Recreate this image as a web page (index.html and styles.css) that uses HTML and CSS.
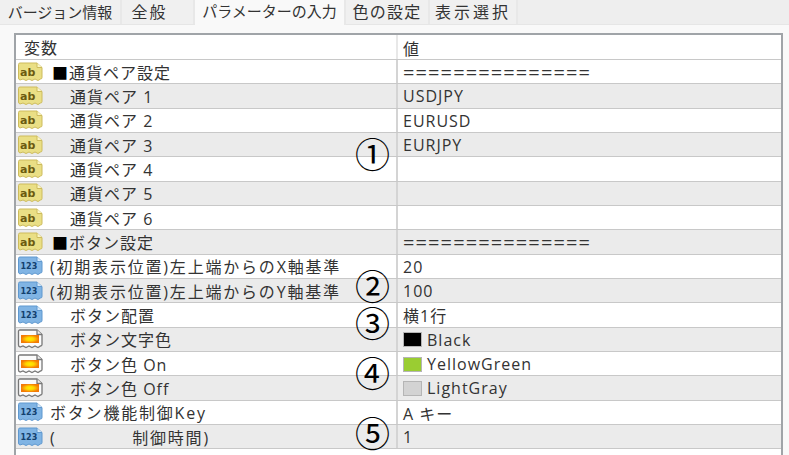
FILE: index.html
```html
<!DOCTYPE html>
<html lang="ja">
<head>
    <meta charset="UTF-8">
    <meta name="viewport" content="width=device-width, initial-scale=1.0">
    <title>パラメーターの入力</title>
    <link rel="stylesheet" href="styles.css">
</head>
<body>
    <svg class="defs" width="0" height="0">
        <defs>
            <path id="page" d="M1.5 2.5 Q1.5 1 3 1 H20 L25 5.5 V15.5 Q25 17 23.5 17 L21 18.5 L18 17 L15 18.5 L12 17 L9 18.5 L6 17 L3 18 Q1.5 17.5 1.5 16 Z"/>
            <g id="icon-ab">
                <use href="#page" fill="#eadf85" stroke="#cdbb5c"/>
                <path d="M20 1 V5.5 H25" fill="#fbf6c4" stroke="#cdbb5c"/>
                <text x="3" y="14" class="icon-text">ab</text>
            </g>
            <g id="icon-num">
                <use href="#page" fill="#80b4e4" stroke="#5f98cf"/>
                <path d="M20 1 V5.5 H25" fill="#d6e9fa" stroke="#5f98cf"/>
                <text x="3.5" y="13" class="icon-text icon-digits">123</text>
            </g>
            <g id="icon-color">
                <use href="#page" fill="#fbfbfb" stroke="#777" stroke-width="1.3"/>
                <path d="M20 1 V5.5 H25" fill="#eee" stroke="#777" stroke-width="1.3"/>
                <rect x="4" y="6" width="18" height="8" fill="url(#flame)"/>
            </g>
            <radialGradient id="flame">
                <stop offset="0" stop-color="#ffee00"/>
                <stop offset="0.45" stop-color="#ffd500"/>
                <stop offset="1" stop-color="#f37a06"/>
            </radialGradient>
        </defs>
    </svg>

    <!-- Onglets -->
    <div class="tabs">
        <div class="tab tab-version">バージョン情報</div>
        <div class="tab tab-general">全般</div>
        <div class="tab tab-active">パラメーターの入力</div>
        <div class="tab tab-colors">色の設定</div>
        <div class="tab tab-display">表示選択</div>
    </div>

    <div class="panel">
        <div class="list">
            <div class="row head">
                <div class="name">変数</div>
                <div class="value">値</div>
            </div>

            <div class="row">
                <div class="name"><svg class="icon"><use href="#icon-ab"/></svg><span class="label lead"><b class="box">■</b>通貨ペア設定</span></div>
                <div class="value rule">===============</div>
            </div>
            <div class="row alt">
                <div class="name"><svg class="icon"><use href="#icon-ab"/></svg><span class="label sub">通貨ペア 1</span></div>
                <div class="value">USDJPY</div>
            </div>
            <div class="row">
                <div class="name"><svg class="icon"><use href="#icon-ab"/></svg><span class="label sub">通貨ペア 2</span></div>
                <div class="value">EURUSD</div>
            </div>
            <div class="row alt">
                <div class="name"><svg class="icon"><use href="#icon-ab"/></svg><span class="label sub">通貨ペア 3</span></div>
                <div class="value">EURJPY</div>
            </div>
            <div class="row">
                <div class="name"><svg class="icon"><use href="#icon-ab"/></svg><span class="label sub">通貨ペア 4</span></div>
                <div class="value"></div>
            </div>
            <div class="row alt">
                <div class="name"><svg class="icon"><use href="#icon-ab"/></svg><span class="label sub">通貨ペア 5</span></div>
                <div class="value"></div>
            </div>
            <div class="row">
                <div class="name"><svg class="icon"><use href="#icon-ab"/></svg><span class="label sub">通貨ペア 6</span></div>
                <div class="value"></div>
            </div>
            <div class="row alt">
                <div class="name"><svg class="icon"><use href="#icon-ab"/></svg><span class="label lead"><b class="box">■</b>ボタン設定</span></div>
                <div class="value rule">===============</div>
            </div>
            <div class="row">
                <div class="name"><svg class="icon"><use href="#icon-num"/></svg><span class="label wide">(初期表示位置)左上端からのX軸基準</span></div>
                <div class="value">20</div>
            </div>
            <div class="row alt">
                <div class="name"><svg class="icon"><use href="#icon-num"/></svg><span class="label wide">(初期表示位置)左上端からのY軸基準</span></div>
                <div class="value">100</div>
            </div>
            <div class="row">
                <div class="name"><svg class="icon"><use href="#icon-num"/></svg><span class="label sub">ボタン配置</span></div>
                <div class="value">横1行</div>
            </div>
            <div class="row alt">
                <div class="name"><svg class="icon"><use href="#icon-color"/></svg><span class="label sub">ボタン文字色</span></div>
                <div class="value"><span class="swatch black"></span>Black</div>
            </div>
            <div class="row">
                <div class="name"><svg class="icon"><use href="#icon-color"/></svg><span class="label sub">ボタン色 On</span></div>
                <div class="value"><span class="swatch green"></span>YellowGreen</div>
            </div>
            <div class="row alt">
                <div class="name"><svg class="icon"><use href="#icon-color"/></svg><span class="label sub">ボタン色 Off</span></div>
                <div class="value"><span class="swatch gray"></span>LightGray</div>
            </div>
            <div class="row">
                <div class="name"><svg class="icon"><use href="#icon-num"/></svg><span class="label wide">ボタン機能制御Key</span></div>
                <div class="value">A キー</div>
            </div>
            <div class="row alt">
                <div class="name"><svg class="icon"><use href="#icon-num"/></svg><span class="label wide">(　　　　&#8201;制御時間)</span></div>
                <div class="value">1</div>
            </div>

            <!-- Repères numérotés -->
            <span class="mark mark-1">①</span>
            <span class="mark mark-2">②</span>
            <span class="mark mark-3">③</span>
            <span class="mark mark-4">④</span>
            <span class="mark mark-5">⑤</span>
        </div>
    </div>
</body>
</html>
```

FILE: styles.css
```css
html, body {
    height: 100%;
}

body {
    margin: 0;
    overflow: hidden;
    background-color: #f9f9f9;
    color: #333;
    font-family: "Open Sans", "Noto Sans CJK JP", sans-serif;
    font-size: 16px;
    letter-spacing: 1px;
}

.defs {
    position: absolute;
}

.tabs {
    display: flex;
    height: 24px;
    background-color: #eeeeee;
    border-bottom: 1px solid #e6e6e6;
}

.tab {
    box-sizing: border-box;
    height: 24px;
    line-height: 25px;
    background-color: #f0f0f0;
    border-right: 2px solid #e8e8e8;
    font-size: 15px;
    letter-spacing: 0;
    text-align: center;
    white-space: nowrap;
}

.tab-version { width: 122px; }
.tab-colors { width: 84px; font-size: 16px; letter-spacing: 1.2px; }
.tab-display { width: 88px; font-size: 16px; letter-spacing: 3px; }

.tab-general {
    width: 73px;
    padding-right: 16px;
    font-size: 16px;
    letter-spacing: 2px;
}

.tab-active {
    width: 151px;
    height: 25px;
    background-color: #f9f9f9;
    line-height: 22px;
}

.panel {
    padding: 8px 6px 0 14px;
}

.list {
    position: relative;
    height: 420px;
    background: #fff;
    border-top: 2px solid #a0a4a8;
    border-left: 2px solid #a0a4a8;
    border-right: 2px solid #a0a4a8;
}

.row {
    display: flex;
    box-sizing: border-box;
    height: 24.33px;
    align-items: center;
    border-bottom: 1px solid #c8c8c8;
    white-space: nowrap;
}

.row.head {
    height: 25px;
}

.row.alt {
    background-color: #ebebeb;
}

.name {
    display: flex;
    width: 379px;
    height: 100%;
    align-items: center;
    padding-left: 1px;
}

.head .name {
    padding-left: 8px;
    width: 372px;
}

.value {
    box-sizing: border-box;
    flex: 1;
    display: flex;
    height: 100%;
    align-items: center;
    padding: 1px 0 0 5px;
    border-left: 2px solid #d4d4d4;
}

.head .value {
    border-left-color: #e8e8e8;
}

.value.rule {
    font-size: 20px;
    letter-spacing: 1.1px;
}

.icon {
    width: 27px;
    height: 20px;
    flex: none;
}

.icon-text {
    font-family: "DejaVu Sans", sans-serif;
    font-size: 11px;
    font-weight: bold;
    letter-spacing: 0;
    fill: #6b5a10;
}

.icon-digits {
    font-size: 8px;
    fill: #123f6e;
}

.label {
    margin-left: 6px;
}

.label.wide {
    letter-spacing: 1.8px;
}

.label.lead {
    margin-left: 8px;
}

.label.sub {
    margin-left: 26px;
}

.box {
    color: #000;
    font-weight: normal;
}

.swatch {
    box-sizing: border-box;
    width: 19px;
    height: 15px;
    margin-right: 5px;
    border: 1px solid #b5b5b5;
}

.black { background-color: #000; }
.green { background-color: #9acd32; }
.gray { background-color: #d3d3d3; }

.mark {
    position: absolute;
    left: 339px;
    font-family: "Noto Sans CJK JP", sans-serif;
    font-size: 35px;
    letter-spacing: 0;
    line-height: 34px;
    color: #000;
}

.mark-1 { top: 101px; }
.mark-2 { top: 233px; }
.mark-3 { top: 270px; }
.mark-4 { top: 320px; }
.mark-5 { top: 380px; }
```
